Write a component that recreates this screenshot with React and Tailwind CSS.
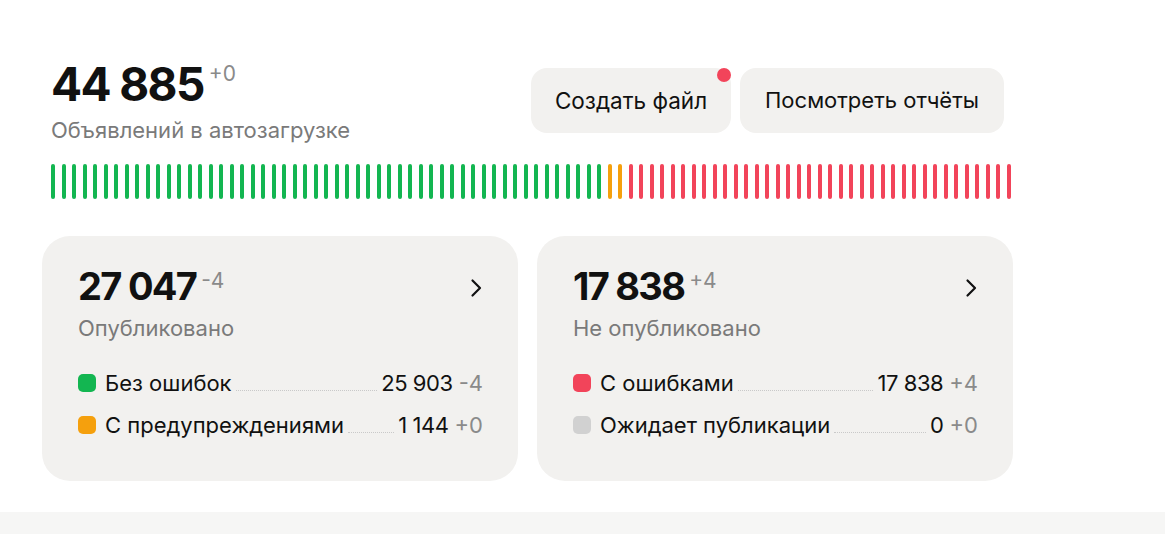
import React from 'react'

const GREEN = 53
const ORANGE = 2
const RED = 37

const BARS = [
  ...Array(GREEN).fill('bg-[#13b651]'),
  ...Array(ORANGE).fill('bg-[#f5a00d]'),
  ...Array(RED).fill('bg-[#f2445a]'),
]

const FONT = { fontFamily: 'Inter, "Noto Sans", sans-serif' }

function Chevron() {
  return (
    <svg width="12" height="20" viewBox="0 0 12 20" fill="none" className="mt-1">
      <path d="M2.5 2.5l7.5 7.5-7.5 7.5" stroke="#111" strokeWidth="2.2" strokeLinecap="round" strokeLinejoin="round" />
    </svg>
  )
}

function Row({ dot, label, value, delta }) {
  return (
    <div className="flex items-baseline text-[22px] leading-7 text-[#111]">
      <span className={`w-[18px] h-[18px] rounded-[5px] self-center mr-[9px] shrink-0 ${dot}`} />
      <span>{label}</span>
      <div className="flex-1 mx-[4px] border-b border-dotted border-[#c9c9c9]" />
      <span className="tracking-[-0.02em]">{value}</span>
      <span className="ml-[6px] text-[#8a8a8a]">{delta}</span>
    </div>
  )
}

function StatCard({ total, delta, title, rows }) {
  return (
    <div className="w-[476px] h-[245px] rounded-[28px] bg-[#f2f1ef] pl-[36px] pr-[35px] pt-[31px]">
      <div className="flex items-center justify-between pr-[1px]">
        <div className="flex items-start">
          <span className="text-[38px] leading-none font-bold tracking-[-0.045em] text-[#111]">{total}</span>
          <span className="ml-[5px] mt-[2px] text-[21px] leading-6 text-[#8a8a8a]">{delta}</span>
        </div>
        <Chevron />
      </div>
      <div className="mt-[11px] text-[22px] leading-6 text-[#7a7a7a]">{title}</div>
      <div className="mt-[29px] flex flex-col gap-[14px]">
        {rows.map((r) => (
          <Row key={r.label} {...r} />
        ))}
      </div>
    </div>
  )
}

export default function App() {
  return (
    <div className="w-full h-[534px] bg-white flex flex-col" style={FONT}>
      <div className="h-[512px] pl-[42px]">
        <div className="w-[971px]">
          {/* Header */}
          <div className="flex justify-between items-start px-[9px] pt-[61px]">
            <div>
              <div className="flex items-start">
                <span className="text-[46px] leading-none font-bold tracking-[-0.035em] text-[#111]">44 885</span>
                <span className="ml-[5px] mt-[1px] text-[21px] leading-6 text-[#8a8a8a]">+0</span>
              </div>
              <div className="mt-[11px] text-[22px] leading-6 text-[#7a7a7a]">Объявлений в автозагрузке</div>
            </div>
            <div className="flex gap-[9px] mt-[7px]">
              <button className="relative h-[65px] w-[200px] rounded-[16px] bg-[#f2f1ef] text-[22.5px] text-[#111]">
                Создать файл
                <span className="absolute right-0 top-0 w-[14px] h-[14px] rounded-full bg-[#f2445a]" />
              </button>
              <button className="h-[65px] w-[264px] rounded-[16px] bg-[#f2f1ef] text-[22px] text-[#111]">
                Посмотреть отчёты
              </button>
            </div>
          </div>

          {/* Progress bars */}
          <div className="ml-[9px] mt-[22px] w-[960px] h-[35px] flex justify-between">
            {BARS.map((c, i) => (
              <div key={i} className={`w-[4px] h-full rounded-full ${c}`} />
            ))}
          </div>

          {/* Cards */}
          <div className="mt-[37px] flex gap-[19px]">
            <StatCard
              total="27 047"
              delta="-4"
              title="Опубликовано"
              rows={[
                { dot: 'bg-[#13b651]', label: 'Без ошибок', value: '25 903', delta: '-4' },
                { dot: 'bg-[#f5a00d]', label: 'С предупреждениями', value: '1 144', delta: '+0' },
              ]}
            />
            <StatCard
              total="17 838"
              delta="+4"
              title="Не опубликовано"
              rows={[
                { dot: 'bg-[#f2445a]', label: 'С ошибками', value: '17 838', delta: '+4' },
                { dot: 'bg-[#d1d1d1]', label: 'Ожидает публикации', value: '0', delta: '+0' },
              ]}
            />
          </div>
        </div>
      </div>
      <div className="h-[22px] bg-[#f6f6f5]" />
    </div>
  )
}
